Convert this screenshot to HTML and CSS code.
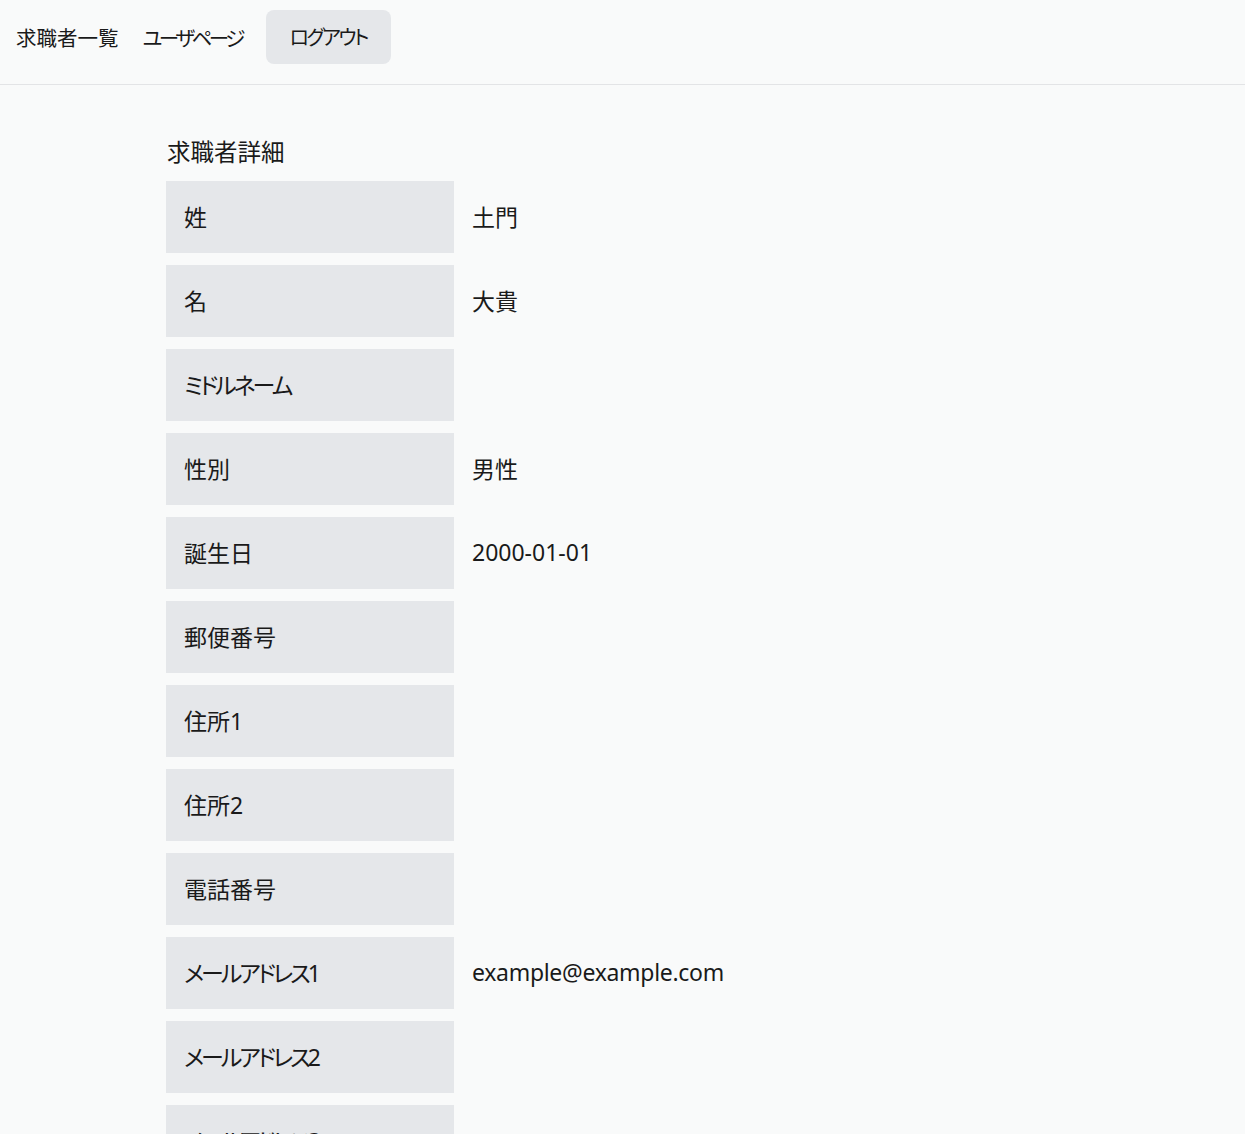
FILE: index.html
```html
<!DOCTYPE html>
<html lang="ja">
<head>
<meta charset="utf-8">
<title>求職者詳細</title>
<link rel="stylesheet" href="styles.css">
</head>
<body>
<header class="site-header">
  <nav class="nav">
    <a class="nav-link" href="#">求職者一覧</a>
    <a class="nav-link kana" href="#">ユーザページ</a>
    <button class="logout" type="button">ログアウト</button>
  </nav>
</header>
<main class="main">
  <h1 class="title">求職者詳細</h1>
  <dl class="details">
    <dt class="label">姓</dt><dd class="value">土門</dd>
    <dt class="label">名</dt><dd class="value">大貴</dd>
    <dt class="label kana">ミドルネーム</dt><dd class="value"></dd>
    <dt class="label">性別</dt><dd class="value">男性</dd>
    <dt class="label">誕生日</dt><dd class="value">2000-01-01</dd>
    <dt class="label">郵便番号</dt><dd class="value"></dd>
    <dt class="label">住所1</dt><dd class="value"></dd>
    <dt class="label">住所2</dt><dd class="value"></dd>
    <dt class="label">電話番号</dt><dd class="value"></dd>
    <dt class="label kana">メールアドレス1</dt><dd class="value latin">example@example.com</dd>
    <dt class="label kana">メールアドレス2</dt><dd class="value"></dd>
    <dt class="label kana">メールアドレス3</dt><dd class="value"></dd>
  </dl>
</main>
</body>
</html>
```
FILE: styles.css
```css
* { box-sizing: border-box; }
html, body {
  margin: 0;
  padding: 0;
  background: #f9fafa;
  color: #1a1a1a;
  font-family: "Noto Sans", "Noto Sans CJK JP", sans-serif;
  font-feature-settings: "palt";
}
.site-header {
  border-bottom: 1px solid #e3e4e6;
  padding: 10px 16px 20px;
}
.nav {
  display: flex;
  align-items: center;
  gap: 24px;
  height: 54px;
}
.nav-link {
  color: #1a1a1a;
  text-decoration: none;
  font-size: 20.5px;
  line-height: 28px;
  white-space: nowrap;
  padding-top: 2px;
}
.nav-link.kana {
  letter-spacing: -3.5px;
}
.logout {
  font: inherit;
  font-size: 20px;
  line-height: 28px;
  color: #1a1a1a;
  background: #e5e7ea;
  border: none;
  border-radius: 8px;
  height: 54px;
  padding: 2px 24px 0;
  white-space: nowrap;
  letter-spacing: -2.5px;
}
.main {
  padding: 51px 166px 40px;
}
.title {
  margin: 0 0 13px;
  font-size: 23.5px;
  font-weight: 400;
  line-height: 32px;
  padding-left: 1px;
}
.details {
  display: grid;
  grid-template-columns: 288px 1fr;
  row-gap: 12px;
  margin: 0;
}
.label, .value {
  margin: 0;
  height: 72px;
  display: flex;
  align-items: center;
  font-size: 23px;
  padding-left: 18px;
  padding-bottom: 2px;
}
.label {
  background: #e5e7ea;
}
.label.kana {
  letter-spacing: -3px;
}
.value.latin {
  letter-spacing: -0.3px;
}
```
